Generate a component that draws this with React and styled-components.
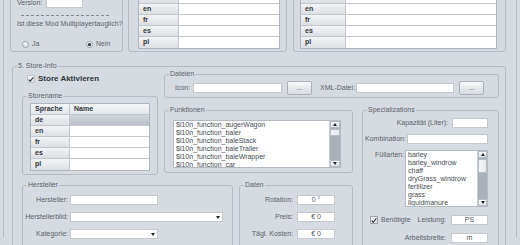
import React from "react";
import styled, { createGlobalStyle } from "styled-components";

const GlobalStyle = createGlobalStyle`
  html, body { margin: 0; padding: 0; background: #d6dbe1; }
  body {
    font-family: "Liberation Sans", Arial, sans-serif;
    font-size: 7px;
    color: #5c626a;
    overflow: hidden;
  }
  *, *::before, *::after { box-sizing: border-box; }
`;

const Page = styled.div`
  width: 520px;
  height: 245px;
  overflow: hidden;
  padding: 0 3px;
`;

const Frame = styled.div`
  height: 100%;
  border-left: 1px solid #b3bac3;
  border-right: 1px solid #b3bac3;
  padding: 0 9px 0 6px;
`;

const TopRow = styled.div`
  display: grid;
  grid-template-columns: 113px 159px 214px;
  column-gap: 5px;
  margin-top: -8px;
  height: 60px;
`;

const Panel = styled.div`
  border: 1px solid #b5bcc5;
  border-radius: 3px;
  padding: ${(p) => p.$pad};
  ${(p) => (p.$shift ? `margin-left:${p.$shift}px;` : "")}
`;

const Label = styled.span`
  color: #5c626a;
  white-space: nowrap;
  line-height: 8px;
  ${(p) => (p.$w ? `width:${p.$w}px; flex: 0 0 ${p.$w}px;` : "")}
  text-align: ${(p) => p.$align || "left"};
  ${(p) => (p.$pl ? `padding-left:${p.$pl}px;` : "")}
  ${(p) => (p.$ml ? `margin-left:${p.$ml};` : "")}
  ${(p) => (p.$mr ? `margin-right:${p.$mr}px;` : "")}
  ${(p) => (p.$mt ? `margin-top:${p.$mt}px;` : "")}
`;

const TextBox = styled.div`
  width: ${(p) => p.$w}px;
  height: ${(p) => p.$h || 10}px;
  flex: 0 0 auto;
  background: #fff;
  border: 1px solid #c3c8cf;
  display: flex;
  align-items: center;
  justify-content: ${(p) => (p.$center ? "center" : "flex-start")};
  color: #4f555d;
  line-height: 8px;
  ${(p) => (p.$ml ? `margin-left:${p.$ml};` : "")}
`;

const ComboArrowZone = styled.span`
  margin-left: auto;
  width: 9px;
  height: 100%;
  display: flex;
  align-items: center;
  justify-content: center;
`;

const Arrow = styled.span`
  width: 0;
  height: 0;
  border-left: 2.5px solid transparent;
  border-right: 2.5px solid transparent;
  ${(p) => (p.$up ? "border-bottom: 3px solid #1f2328;" : "border-top: 3px solid #1f2328;")}
`;

const VersionRow = styled.div`
  display: flex;
  align-items: center;
  height: 11px;
`;

const DashLine = styled.div`
  margin: 7px 0 0 4px;
  width: 88px;
  border-top: 1px dashed #858b93;
`;

const Question = styled.div`
  margin-top: 4px;
  line-height: 8px;
  white-space: nowrap;
`;

const RadioRow = styled.div`
  margin-top: 12px;
  display: flex;
  align-items: center;
  padding-left: 5px;
`;

const RadioOption = styled.div`
  display: flex;
  align-items: center;
  gap: 3px;
  width: ${(p) => p.$w || "auto"};
  line-height: 8px;
`;

const RadioCircle = styled.span`
  width: 7px;
  height: 7px;
  border-radius: 50%;
  border: 1px solid #9da4ac;
  background: linear-gradient(#f6f7f8, #dfe2e6);
  display: flex;
  align-items: center;
  justify-content: center;
  &::after {
    content: "";
    width: 3px;
    height: 3px;
    border-radius: 50%;
    background: ${(p) => (p.$on ? "#2a2f35" : "transparent")};
  }
`;

const LangTableBox = styled.div`
  border: 1px solid #aeb5be;
  border-top: ${(p) => (p.$noTop ? "none" : "1px solid #aeb5be")};
`;

const LangRow = styled.div`
  display: grid;
  grid-template-columns: ${(p) => p.$labelW}px 1fr;
  height: 11px;
  border-bottom: 1px solid #c2c7ce;
  &:last-child { border-bottom: none; }
`;

const LangCell = styled.div`
  background: linear-gradient(#f3f4f6, #dcdfe4);
  border-right: 1px solid #c2c7ce;
  font-weight: bold;
  color: #30353b;
  line-height: 10px;
  padding-left: 4px;
`;

const ValueCell = styled.div`
  background: ${(p) => (p.$sel ? "linear-gradient(#d2d6dc, #bcc2ca)" : "#fff")};
  color: #30353b;
  line-height: 10px;
  padding-left: 4px;
`;

const HeadCell = styled(LangCell)`
  background: linear-gradient(#f5f6f8, #e3e6ea);
`;

const HeadValueCell = styled(ValueCell)`
  background: linear-gradient(#f5f6f8, #e3e6ea);
  font-weight: bold;
`;

const GroupBox = styled.fieldset`
  margin: 0;
  padding: 0;
  min-width: 0;
  border: 1px solid #b4bbc4;
  border-radius: 3px;
  ${(p) => (p.$area ? `grid-area:${p.$area};` : "")}
`;

const Legend = styled.legend`
  margin-left: 4px;
  padding: 0 1px;
  font-size: 7px;
  line-height: 8px;
  color: #5c626a;
`;

const StoreInfo = styled(GroupBox)`
  margin: 10px 1px 0 2px;
`;

const StoreGrid = styled.div`
  display: grid;
  grid-template-columns: 136px 189px 140px;
  grid-template-rows: 28px 67px auto;
  grid-template-areas:
    "left dat dat"
    "left fn sp"
    "bot bot sp";
  column-gap: 6px;
  row-gap: 8px;
  padding: 0 6px 0 9px;
`;

const LeftColumn = styled.div`
  grid-area: left;
  display: flex;
  flex-direction: column;
`;

const CheckRow = styled.div`
  display: flex;
  align-items: center;
  gap: ${(p) => p.$gap || 3}px;
  height: ${(p) => p.$h || 10}px;
  margin-top: ${(p) => p.$mt || 0}px;
  padding-left: ${(p) => p.$pl || 0}px;
`;

const CheckBox = styled.span`
  width: 8px;
  height: 8px;
  flex: 0 0 8px;
  border: 1px solid ${(p) => (p.$faint ? "#c2c7ce" : "#9aa1a9")};
  background: linear-gradient(#f2f3f5, #dfe2e6);
  display: flex;
  align-items: center;
  justify-content: center;
`;

const BigCheckText = styled.span`
  font-size: 8px;
  font-weight: bold;
  color: #30353b;
  line-height: 10px;
`;

const StorenameBox = styled(GroupBox)`
  margin-top: 8px;
  flex: 1;
`;

const StoreTableWrap = styled.div`
  padding: 3px 7px 3px 7px;
`;

const DateienRow = styled.div`
  display: flex;
  align-items: center;
  height: 14px;
  margin-top: 3px;
  padding-left: 10px;
`;

const DotsButton = styled.div`
  width: 25px;
  height: 14px;
  flex: 0 0 25px;
  margin-left: 5px;
  border: 1px solid #a9b0b9;
  border-radius: 2px;
  background: linear-gradient(#f8f9fa, #e6e9ec 50%, #d9dde2);
  display: flex;
  align-items: center;
  justify-content: center;
  color: #4f555d;
  line-height: 8px;
`;

const ListWrap = styled.div`
  padding: ${(p) => p.$pad};
`;

const ListBox = styled.div`
  display: flex;
  width: ${(p) => p.$w}px;
  height: ${(p) => p.$h}px;
  background: #fff;
  border: 1px solid #b3bac3;
  ${(p) => (p.$ml ? `margin-left:${p.$ml};` : "")}
`;

const ListItems = styled.div`
  flex: 1;
  overflow: hidden;
  padding: 0 2px;
`;

const ListItem = styled.div`
  height: 8px;
  line-height: 8px;
  color: #454b53;
  white-space: nowrap;
`;

const ScrollBar = styled.div`
  width: ${(p) => p.$w || 10}px;
  display: flex;
  flex-direction: column;
  background: #aab0b8;
  border-left: 1px solid #c8cdd3;
`;

const ScrollBtn = styled.div`
  height: 7px;
  background: linear-gradient(#fbfbfc, #e1e4e8);
  border: 1px solid #b7bdc5;
  display: flex;
  align-items: center;
  justify-content: center;
  margin-top: ${(p) => (p.$bottom ? "auto" : "0")};
`;

const Thumb = styled.div`
  height: ${(p) => p.$h}px;
  margin-top: 1px;
  background: linear-gradient(90deg, #f6f7f8, #e4e7ea);
  border: 1px solid #b7bdc5;
`;

const SpecBox = styled(GroupBox)`
  margin-left: 3px;
  align-self: start;
  height: 150px;
`;

const SpecBody = styled.div`
  padding: 4px 10px 0 0;
`;

const SpecRow = styled.div`
  display: flex;
  align-items: ${(p) => p.$align || "center"};
  justify-content: ${(p) => p.$justify || "flex-start"};
  gap: ${(p) => p.$gap || 0}px;
  margin-top: ${(p) => p.$mt || 0}px;
  min-height: 10px;
`;

const BottomRow = styled.div`
  grid-area: bot;
  display: flex;
  gap: 6px;
`;

const HerstellerBox = styled(GroupBox)`
  flex: 0 0 211px;
  height: 80px;
`;

const DatenBox = styled(GroupBox)`
  flex: 1;
  height: 80px;
`;

const FormGrid = styled.div`
  display: grid;
  grid-template-columns: ${(p) => p.$cols};
  column-gap: ${(p) => p.$cg}px;
  row-gap: 7px;
  align-items: center;
  padding: ${(p) => p.$pad};
`;

const Check = () => (
  <svg width="7" height="7" viewBox="0 0 7 7">
    <path d="M0.8 3.6 L2.7 5.6 L6.3 0.9" stroke="#1f2328" strokeWidth="1.2" fill="none" />
  </svg>
);

const Combo = ({ w }) => (
  <TextBox $w={w}>
    <ComboArrowZone>
      <Arrow />
    </ComboArrowZone>
  </TextBox>
);

const langs = ["de", "en", "fr", "es", "pl"];

const LangTable = ({ labelW, header, selFirst, noTop }) => (
  <LangTableBox $noTop={noTop}>
    {header && (
      <LangRow $labelW={labelW}>
        <HeadCell>Sprache</HeadCell>
        <HeadValueCell>Name</HeadValueCell>
      </LangRow>
    )}
    {langs.map((l, i) => (
      <LangRow key={l} $labelW={labelW}>
        <LangCell>{l}</LangCell>
        <ValueCell $sel={selFirst && i === 0} />
      </LangRow>
    ))}
  </LangTableBox>
);

const functions = [
  "$l10n_function_augerWagon",
  "$l10n_function_baler",
  "$l10n_function_baleStack",
  "$l10n_function_baleTrailer",
  "$l10n_function_baleWrapper",
  "$l10n_function_car",
];

const fillTypes = [
  "barley",
  "barley_windrow",
  "chaff",
  "dryGrass_windrow",
  "fertilizer",
  "grass",
  "liquidmanure",
];

export default function App() {
  return (
    <>
      <GlobalStyle />
      <Page>
        <Frame>
          <TopRow>
            <Panel $pad="4px 6px 0 6px">
              <VersionRow>
                <Label $w={29}>Version:</Label>
                <TextBox $w={37} $h={11} />
              </VersionRow>
              <DashLine />
              <Question>Ist diese Mod Multiplayertauglich?</Question>
              <RadioRow>
                <RadioOption $w="64px">
                  <RadioCircle />
                  Ja
                </RadioOption>
                <RadioOption>
                  <RadioCircle $on />
                  Nein
                </RadioOption>
              </RadioRow>
            </Panel>
            <Panel $pad="0 6px 0 9px">
              <LangTable labelW={40} noTop />
            </Panel>
            <Panel $pad="0 8px 0 6px" $shift={1}>
              <LangTable labelW={45} noTop />
            </Panel>
          </TopRow>

          <StoreInfo>
            <Legend>5. Store-Info</Legend>
            <StoreGrid>
              <LeftColumn>
                <CheckRow $mt={4} $pl={5} $gap={3}>
                  <CheckBox $faint>
                    <Check />
                  </CheckBox>
                  <BigCheckText>Store Aktivieren</BigCheckText>
                </CheckRow>
                <StorenameBox>
                  <Legend>Storename</Legend>
                  <StoreTableWrap>
                    <LangTable labelW={39} header selFirst />
                  </StoreTableWrap>
                </StorenameBox>
              </LeftColumn>

              <GroupBox $area="dat">
                <Legend>Dateien</Legend>
                <DateienRow>
                  <Label $w={18}>Icon:</Label>
                  <TextBox $w={89} />
                  <DotsButton>...</DotsButton>
                  <Label $w={36} $ml="8px">
                    XML-Datei:
                  </Label>
                  <TextBox $w={98} />
                  <DotsButton>...</DotsButton>
                </DateienRow>
              </GroupBox>

              <GroupBox $area="fn">
                <Legend>Funktionen</Legend>
                <ListWrap $pad="6px 0 0 8px">
                  <ListBox $w={168} $h={48}>
                    <ListItems>
                      {functions.map((f) => (
                        <ListItem key={f}>{f}</ListItem>
                      ))}
                    </ListItems>
                    <ScrollBar $w={11}>
                      <ScrollBtn>
                        <Arrow $up />
                      </ScrollBtn>
                      <Thumb $h={7} />
                      <ScrollBtn $bottom>
                        <Arrow />
                      </ScrollBtn>
                    </ScrollBar>
                  </ListBox>
                </ListWrap>
              </GroupBox>

              <SpecBox $area="sp">
                <Legend>Specializations</Legend>
                <SpecBody>
                  <SpecRow $justify="flex-end" $gap={4}>
                    <Label>Kapazität (Liter):</Label>
                    <TextBox $w={36} />
                  </SpecRow>
                  <SpecRow $mt={6}>
                    <Label $pl={2}>Kombination:</Label>
                    <TextBox $w={81} $ml="auto" />
                  </SpecRow>
                  <SpecRow $mt={6} $align="flex-start">
                    <Label $pl={12} $mt={1}>
                      Füllarten:
                    </Label>
                    <ListBox $w={83} $h={57} $ml="auto">
                      <ListItems>
                        {fillTypes.map((f) => (
                          <ListItem key={f}>{f}</ListItem>
                        ))}
                      </ListItems>
                      <ScrollBar>
                        <ScrollBtn>
                          <Arrow $up />
                        </ScrollBtn>
                        <Thumb $h={14} />
                        <ScrollBtn $bottom>
                          <Arrow />
                        </ScrollBtn>
                      </ScrollBar>
                    </ListBox>
                  </SpecRow>
                  <SpecRow $mt={8}>
                    <CheckRow $pl={7} $gap={3} $h={9}>
                      <CheckBox>
                        <Check />
                      </CheckBox>
                      <Label>Benötigte</Label>
                    </CheckRow>
                    <Label $ml="auto" $mr={5}>
                      Leistung:
                    </Label>
                    <TextBox $w={37} $center>
                      PS
                    </TextBox>
                  </SpecRow>
                  <SpecRow $mt={8} $justify="flex-end" $gap={5}>
                    <Label>Arbeitsbreite:</Label>
                    <TextBox $w={37} $center>
                      m
                    </TextBox>
                  </SpecRow>
                </SpecBody>
              </SpecBox>

              <BottomRow>
                <HerstellerBox>
                  <Legend>Hersteller</Legend>
                  <FormGrid $cols="43px auto" $cg={2} $pad="6px 0 0 2px">
                    <Label $align="right">Hersteller:</Label>
                    <TextBox $w={88} />
                    <Label $align="right">Herstellerbild:</Label>
                    <Combo w={153} />
                    <Label $align="right">Kategorie:</Label>
                    <Combo w={88} />
                  </FormGrid>
                </HerstellerBox>
                <DatenBox>
                  <Legend>Daten</Legend>
                  <FormGrid $cols="1fr 38px" $cg={4} $pad="6px 17px 0 5px">
                    <Label $align="right">Rotation:</Label>
                    <TextBox $w={38} $center>
                      0 °
                    </TextBox>
                    <Label $align="right">Preis:</Label>
                    <TextBox $w={38} $center>
                      € 0
                    </TextBox>
                    <Label $align="right">Tägl. Kosten:</Label>
                    <TextBox $w={38} $center>
                      € 0
                    </TextBox>
                  </FormGrid>
                </DatenBox>
              </BottomRow>
            </StoreGrid>
          </StoreInfo>
        </Frame>
      </Page>
    </>
  );
}
